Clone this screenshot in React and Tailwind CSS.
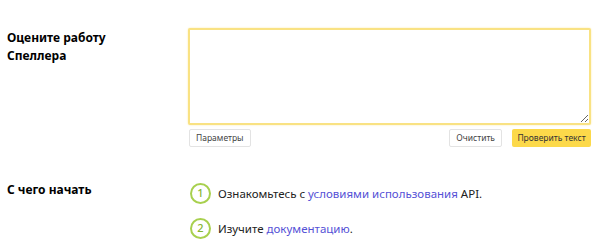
export default function App() {
  return (
    <div className="w-[600px] h-[250px] bg-white overflow-hidden pl-[7px] pr-[9px] pt-[28px]" style={{ fontFamily: '"Noto Sans", "Open Sans", sans-serif' }}>
      <div className="flex">
        <div className="w-[181px] shrink-0 text-[12px] leading-[18px] font-bold text-black pt-[1px]">
          <div>Оцените работу</div>
          <div>Спеллера</div>
        </div>
        <div className="flex-1 flex flex-col">
          <textarea className="h-[97px] w-full border-2 border-[#f9e283] rounded-[2px] bg-white outline-none resize-y shadow-[0_0_2px_#fbe9a0]" />
          <div className="flex items-center mt-[4px]">
            <button className="h-[18px] px-[6px] ml-[1px] border border-[#e3e3e3] rounded-[2px] bg-white text-[8.5px] text-[#444]">Параметры</button>
            <div className="flex-1" />
            <button className="h-[18px] px-[6px] border border-[#e3e3e3] rounded-[2px] bg-white text-[8.5px] text-[#444]">Очистить</button>
            <button className="h-[18px] ml-[10px] w-[79px] rounded-[2px] bg-[#fcd94a] text-[8.5px] text-[#333]">Проверить текст</button>
          </div>
        </div>
      </div>
      <div className="flex mt-[33px]">
        <div className="w-[181px] shrink-0 text-[12px] leading-[18px] font-bold text-black pt-[1px]">С чего начать</div>
        <div className="flex-1 flex flex-col gap-[14px] pt-[3px] text-[11.5px] text-[#222]">
          <div className="flex items-center gap-[7px] pl-[2px]">
            <div className="w-[21px] h-[21px] rounded-full border-2 border-[#a8d04e] flex items-center justify-center text-[11px] font-medium text-[#85b531]">1</div>
            <div>Ознакомьтесь с <span className="text-[#5551d6]">условиями использования</span> API.</div>
          </div>
          <div className="flex items-center gap-[7px] pl-[2px]">
            <div className="w-[21px] h-[21px] rounded-full border-2 border-[#a8d04e] flex items-center justify-center text-[11px] font-medium text-[#85b531]">2</div>
            <div>Изучите <span className="text-[#5551d6]">документацию</span>.</div>
          </div>
        </div>
      </div>
    </div>
  );
}
